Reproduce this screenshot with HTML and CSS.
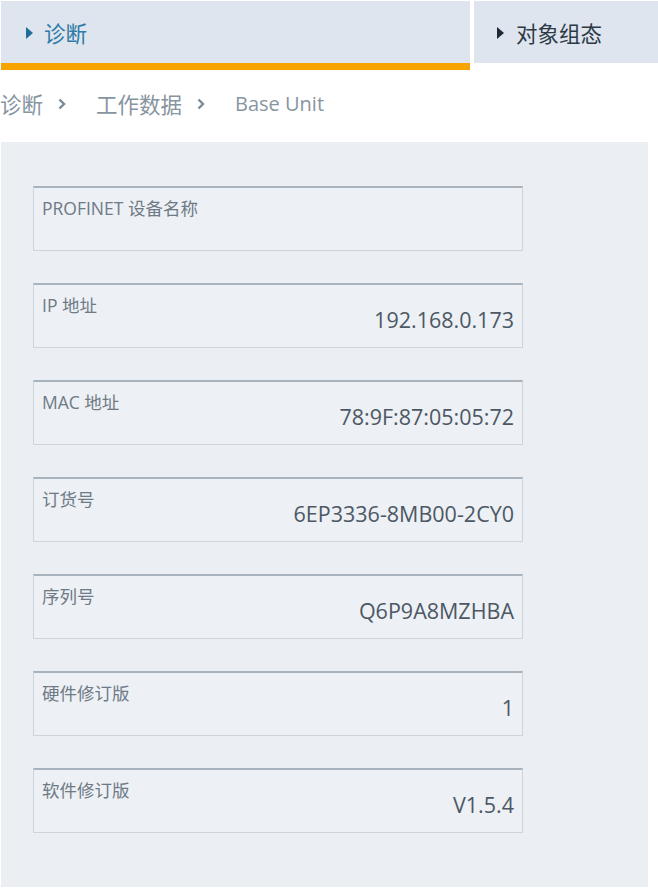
FILE: index.html
```html
<!DOCTYPE html>
<html lang="zh">
<head>
<meta charset="utf-8">
<link rel="stylesheet" href="styles.css">
</head>
<body>
<div class="tabs">
  <div class="tab tab-active"><span class="arrow"></span><span class="tab-text">诊断</span></div>
  <div class="tab tab-other"><span class="arrow"></span><span class="tab-text">对象组态</span></div>
</div>
<div class="crumbs">
  <span class="crumb">诊断</span><svg class="sep" viewBox="0 0 8 12" width="8" height="12"><path d="M1.5 1.5 L6 6 L1.5 10.5" fill="none" stroke="#7b8a96" stroke-width="2.4"/></svg>
  <span class="crumb">工作数据</span><svg class="sep" viewBox="0 0 8 12" width="8" height="12"><path d="M1.5 1.5 L6 6 L1.5 10.5" fill="none" stroke="#7b8a96" stroke-width="2.4"/></svg>
  <span class="crumb crumb-latin">Base Unit</span>
</div>
<div class="panel">
  <div class="field"><div class="label">PROFINET 设备名称</div><div class="value"></div></div>
  <div class="field"><div class="label">IP 地址</div><div class="value">192.168.0.173</div></div>
  <div class="field"><div class="label">MAC 地址</div><div class="value">78:9F:87:05:05:72</div></div>
  <div class="field"><div class="label">订货号</div><div class="value">6EP3336-8MB00-2CY0</div></div>
  <div class="field"><div class="label">序列号</div><div class="value">Q6P9A8MZHBA</div></div>
  <div class="field"><div class="label">硬件修订版</div><div class="value">1</div></div>
  <div class="field"><div class="label">软件修订版</div><div class="value">V1.5.4</div></div>
</div>
</body>
</html>
```
FILE: styles.css
```css
html, body {
  margin: 0;
  padding: 0;
  background: #ffffff;
  font-family: "Open Sans", "Noto Sans CJK SC", sans-serif;
}
.tabs {
  display: flex;
  padding: 1px 0 0 1px;
  gap: 4px;
}
.tab {
  height: 62px;
  background: #dfe5ee;
  display: flex;
  align-items: center;
  box-sizing: border-box;
  font-size: 21.5px;
}
.tab-active {
  width: 469px;
  height: 69px;
  padding-left: 25px;
  border-bottom: 7px solid #f7a400;
  color: #2e7ba6;
}
.tab-other {
  flex: 1;
  padding-left: 23px;
  color: #2d3a45;
}
.arrow {
  width: 0;
  height: 0;
  border-top: 6px solid transparent;
  border-bottom: 6px solid transparent;
  border-left: 7px solid currentColor;
  margin-right: 11px;
  margin-top: 2px;
}
.tab-active .arrow { border-left-color: #1f6e99; }
.tab-other .arrow { border-left-color: #1e2a35; margin-right: 12px; }
.crumbs {
  display: flex;
  align-items: center;
  height: 72px;
  box-sizing: border-box;
  padding-bottom: 6px;
  font-size: 21.5px;
  color: #8795a1;
}
.crumb { white-space: nowrap; }
.crumb-latin { font-size: 20px; }
.sep {
  display: block;
  margin: 2px 30px 0 15px;
}
.panel {
  margin: 0 10px 0 1px;
  width: 647px;
  height: 745px;
  box-sizing: border-box;
  background: #ebeff3;
  padding: 44px 0 0 32px;
  display: flex;
  flex-direction: column;
  gap: 32px;
}
.field {
  width: 490px;
  height: 65px;
  box-sizing: border-box;
  border: 1px solid #cdd5dc;
  border-top: 2px solid #a8b3bd;
  background: #edf0f4;
  padding: 10px 8px 0 8px;
}
.label {
  font-size: 17.5px;
  color: #6e7a86;
  line-height: 20px;
}
.value {
  text-align: right;
  font-size: 21.5px;
  color: #4c5864;
  line-height: 24px;
  margin-top: -7px;
}
```
